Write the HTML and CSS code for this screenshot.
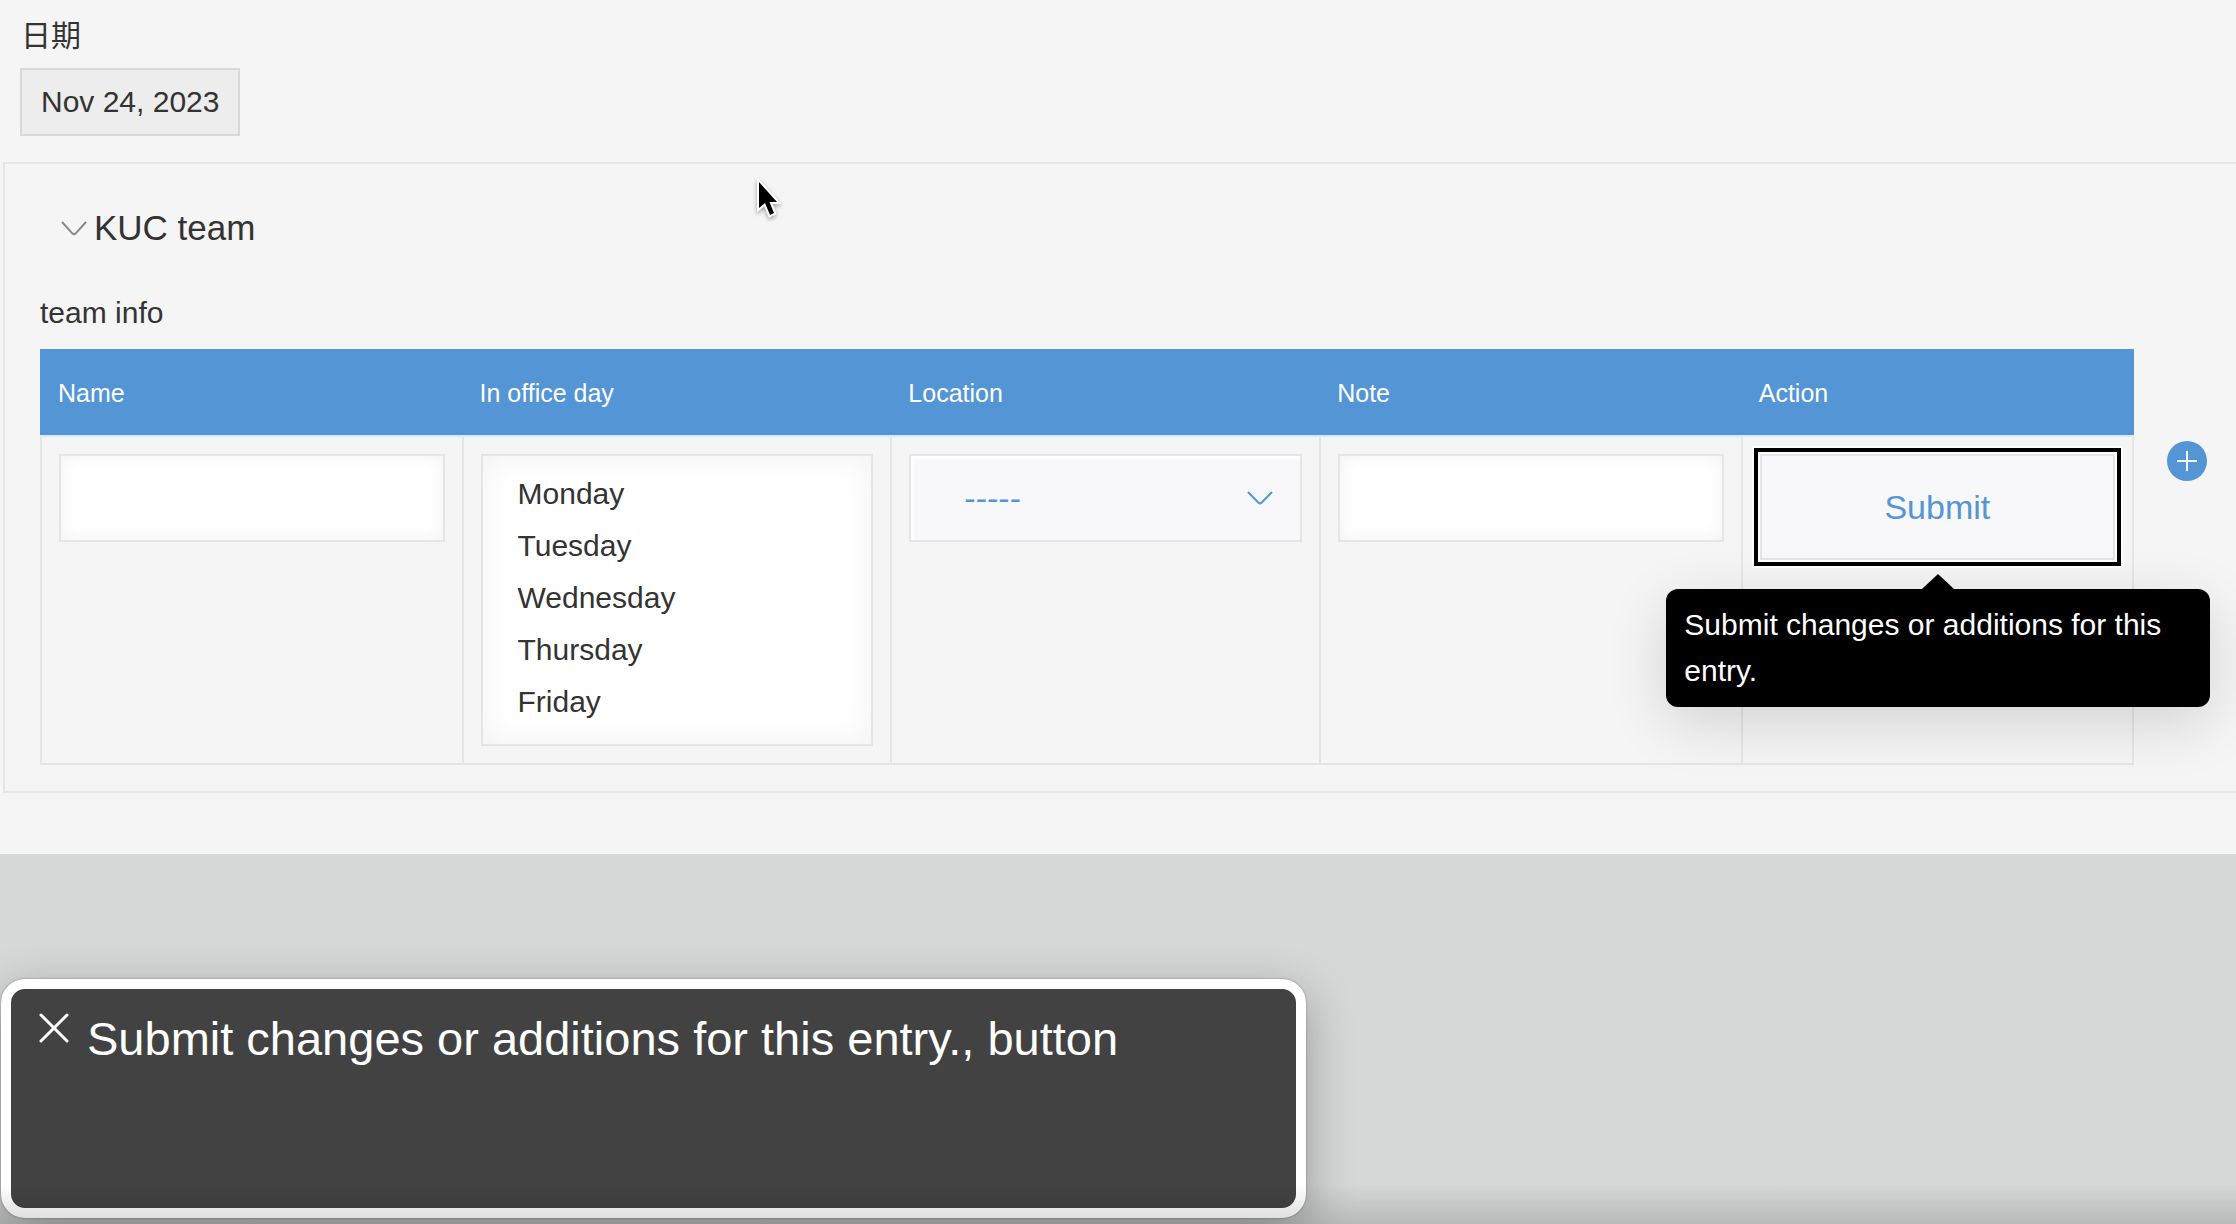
FILE: index.html
```html
<!DOCTYPE html>
<html lang="en">
<head>
<meta charset="utf-8">
<meta name="viewport" content="width=device-width, initial-scale=1">
<title>KUC team</title>
<link rel="stylesheet" href="styles.css">
</head>
<body>
<main class="record">
  <section class="date-field">
    <div class="date-label" lang="zh">日期</div>
    <div class="date-value">Nov 24, 2023</div>
  </section>

  <section class="group">
    <h2 class="group-heading">
      <button class="group-toggle" type="button" aria-expanded="true">
        <svg class="chevron" viewBox="0 0 26 15" aria-hidden="true"><path d="M1 1 L11.5 12.6 Q13 14 14.5 12.6 L25 1"/></svg>
        KUC team
      </button>
    </h2>
    <div class="table-label" id="team-info">team info</div>
    <div class="table-row">
      <table class="team-table" aria-labelledby="team-info">
        <colgroup>
          <col class="col-name"><col class="col-day"><col class="col-location"><col class="col-note"><col>
        </colgroup>
        <thead>
          <tr><th>Name</th><th>In office day</th><th>Location</th><th>Note</th><th>Action</th></tr>
        </thead>
        <tbody>
          <tr>
            <td><input class="text-input" type="text" aria-label="Name"></td>
            <td>
              <select class="day-list" multiple size="5" aria-label="In office day">
                <option>Monday</option>
                <option>Tuesday</option>
                <option>Wednesday</option>
                <option>Thursday</option>
                <option>Friday</option>
              </select>
            </td>
            <td>
              <div class="dropdown">
                <select class="dropdown-select" aria-label="Location"><option>-----</option></select>
                <svg class="chevron dropdown-arrow" viewBox="0 0 26 15" aria-hidden="true"><path d="M1 1 L11.5 11.8 Q13 13 14.5 11.8 L25 1"/></svg>
              </div>
            </td>
            <td><input class="text-input" type="text" aria-label="Note"></td>
            <td>
              <div class="action">
                <button class="submit" type="button" aria-describedby="submit-tip">Submit</button>
                <div class="tooltip" id="submit-tip" role="tooltip">Submit changes or additions for this entry.</div>
              </div>
            </td>
          </tr>
        </tbody>
      </table>
      <button class="add-row" type="button" aria-label="Add row">
        <svg viewBox="0 0 40 40" aria-hidden="true"><circle cx="20" cy="20" r="20"/><path d="M20 10V30M10 20H30"/></svg>
      </button>
    </div>
  </section>
</main>

<footer class="desktop">
  <div class="caption-panel">
    <button class="close" type="button" aria-label="Close">
      <svg viewBox="0 0 30 30" aria-hidden="true"><path d="M2 2L28 28M28 2L2 28"/></svg>
    </button>
    <p class="caption-text">Submit changes or additions for this entry., button</p>
  </div>
</footer>

<svg class="cursor" viewBox="0 0 28 44" aria-hidden="true"><path d="M3 4V30L9 25L14 37L18 35L13.500 24H21Z"/></svg>
</body>
</html>
```
FILE: styles.css
```css
* {
  box-sizing: border-box;
}

body {
  margin: 0;
  min-height: 100vh;
  display: flex;
  flex-direction: column;
  position: relative;
  overflow-x: hidden;
  background: #d6d8d7;
  color: #333;
  font-family: "Liberation Sans", "Noto Sans CJK SC", sans-serif;
  font-size: 30px;
}

button,
input,
select {
  font: inherit;
  color: inherit;
  margin: 0;
}

.record {
  background: #f5f5f5;
  padding: 16px 0 61px 3px;
}

.date-field {
  margin: 0 0 26px 17px;
}

.date-label {
  padding-left: 1px;
  line-height: 40px;
  margin-bottom: 12px;
}

.date-value {
  width: max-content;
  padding: 0 19px;
  border: 2px solid #d8d8d8;
  background: #ededed;
  line-height: 64px;
}

.group {
  border: 2px solid #e4e5e7;
  border-right: 0;
  padding: 40px 29px 26px 35px;
}

.group-heading {
  margin: 0 0 41px 21px;
  font-size: 35px;
  font-weight: 400;
  line-height: 48px;
}

.group-toggle {
  display: flex;
  align-items: center;
  gap: 7px;
  padding: 0;
  border: 0;
  background: none;
}

.chevron {
  width: 26px;
  height: 15px;
  fill: none;
  stroke: #888;
  stroke-width: 2;
}

.table-label {
  line-height: 40px;
  margin-bottom: 16px;
}

.table-row {
  display: flex;
  align-items: flex-start;
  gap: 33px;
}

.team-table {
  flex: 1;
  min-width: 0;
  table-layout: fixed;
  border-collapse: separate;
  border-spacing: 0;
}

.col-name,
.col-note {
  width: 20.13%;
}

.col-day,
.col-location {
  width: 20.48%;
}

th {
  height: 86px;
  padding: 2px 18px 0;
  background: #5395d5;
  color: #fff;
  font-size: 25px;
  font-weight: 400;
  text-align: left;
}

td {
  padding: 17px;
  vertical-align: top;
  border: solid #e4e5e7;
  border-width: 2px 0 2px 2px;
  border-top-color: #d5ebfb;
}

td:last-child {
  border-right-width: 2px;
}

.text-input {
  display: block;
  width: 100%;
  height: 88px;
  padding: 0 18px;
  border: 2px solid #e4e5e7;
  border-radius: 0;
  background: #fff;
  box-shadow: inset 0 0 16px 2px #f4f4f5;
}

.day-list {
  display: block;
  width: 100%;
  height: 292px;
  padding: 12px 0;
  border: 2px solid #e4e5e7;
  border-radius: 0;
  background: #fff;
  box-shadow: inset 0 0 32px 2px #f3f3f4;
  overflow: hidden;
  outline: 0;
}

.day-list option {
  padding: 9px 35px;
}

.dropdown {
  display: grid;
  align-items: center;
  height: 88px;
  border: 2px solid #e4e5e7;
  background: #f8f8fb;
  box-shadow: inset 3px 3px 2px #fdfdfe;
  color: #5395d5;
}

.dropdown-select {
  grid-area: 1 / 1;
  width: 100%;
  height: 100%;
  padding: 0 53px;
  border: 0;
  background: none;
  appearance: none;
  font-size: 34px;
}

.dropdown-arrow {
  grid-area: 1 / 1;
  justify-self: end;
  margin-right: 27px;
  pointer-events: none;
  stroke: #5395d5;
}

.action {
  position: relative;
}

.submit {
  display: block;
  width: 100%;
  height: 106px;
  border: 2px solid #e3e5e8;
  background: #f8f8fb;
  color: #5395d5;
  font-size: 34px;
  outline: 4px solid #000;
  outline-offset: 2px;
  box-shadow: 0 0 0 8px #fff;
}

.tooltip {
  position: absolute;
  top: 135px;
  left: 50%;
  width: 544px;
  margin-left: -271px;
  padding: 13px 18px;
  border-radius: 12px;
  background: #000;
  color: #fff;
  line-height: 46px;
  box-shadow: 0 16px 60px rgba(0, 0, 0, 0.14);
}

.tooltip::before {
  content: "";
  position: absolute;
  bottom: 100%;
  left: 50%;
  margin-left: -16px;
  border: solid transparent;
  border-width: 0 16px 15px;
  border-bottom-color: #000;
}

.add-row {
  width: 40px;
  height: 40px;
  margin-top: 92px;
  padding: 0;
  border: 0;
  background: none;
}

.add-row svg {
  display: block;
  fill: #5395d5;
  stroke: #fff;
  stroke-width: 2;
}

.add-row circle {
  stroke: none;
}

.desktop {
  flex: 1;
  position: relative;
  padding: 125px 1px 5px;
  overflow: hidden;
}

.desktop::after {
  content: "";
  position: absolute;
  inset: auto 0 0;
  height: 40px;
  background: linear-gradient(transparent, rgba(0, 0, 0, 0.14));
  pointer-events: none;
}

.caption-panel {
  display: flex;
  align-items: flex-start;
  gap: 18px;
  width: 1305px;
  max-width: 100%;
  min-height: 239px;
  padding: 24px 28px;
  border: 10px solid #fff;
  border-radius: 24px;
  background: #424242;
  color: #fff;
  box-shadow: 0 0 2px rgba(0, 0, 0, 0.4), 0 14px 48px rgba(0, 0, 0, 0.3);
}

.close {
  width: 30px;
  height: 30px;
  padding: 0;
  border: 0;
  background: none;
}

.close svg {
  display: block;
  stroke: #fff;
  stroke-width: 3;
  stroke-linecap: round;
}

.caption-text {
  margin: 0;
  font-size: 47px;
  line-height: 52px;
}

.cursor {
  position: absolute;
  left: 756px;
  top: 178px;
  width: 28px;
  height: 44px;
  fill: #000;
  stroke: #fff;
  stroke-width: 4;
  paint-order: stroke;
  filter: drop-shadow(0 2px 2px rgba(0, 0, 0, 0.35));
}
```
